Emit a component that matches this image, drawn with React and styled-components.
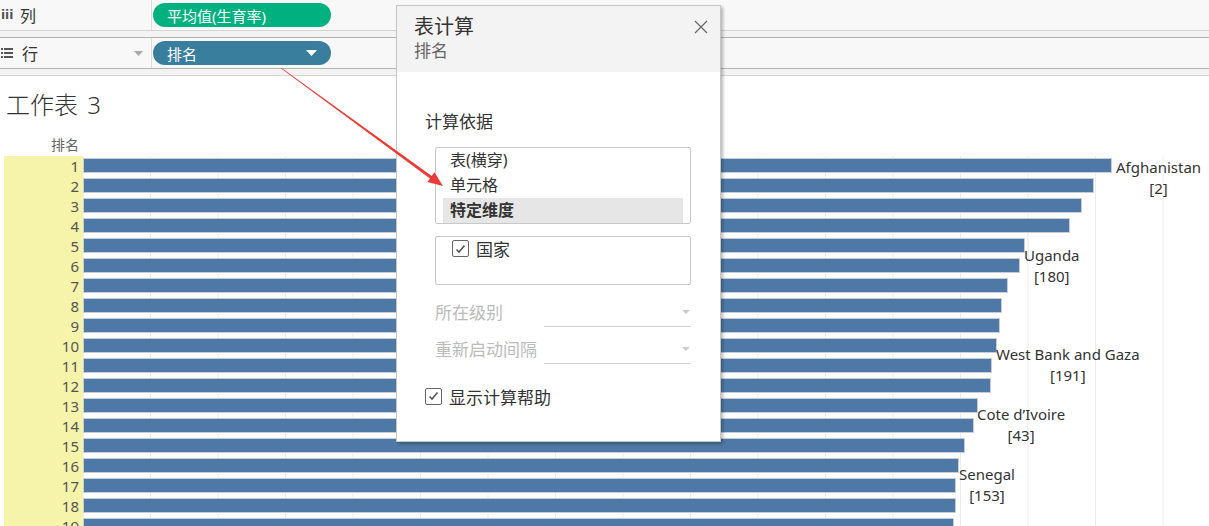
import React from "react";
import styled, { createGlobalStyle } from "styled-components";

const Global = createGlobalStyle`
  html, body { margin: 0; padding: 0; background: #fff; }
  body { font-family: "Noto Sans", "Noto Sans CJK SC", sans-serif; color: #333; overflow: hidden; }
  * { box-sizing: border-box; }
`;

const Page = styled.div`
  position: relative;
  width: 1209px;
  height: 526px;
  overflow: hidden;
  background: #fff;
`;

const ShelfRow = styled.div`
  display: flex;
  height: ${(p) => p.$h}px;
  background: #f8f8f8;
`;

const ShelfGap = styled.div`
  height: 8px;
  background: #f3f3f3;
  border-top: 1px solid ${(p) => p.$top};
  border-bottom: 1px solid ${(p) => p.$bottom};
`;

const ShelfLabel = styled.div`
  width: 152px;
  display: flex;
  align-items: center;
  gap: 9px;
  padding-left: 1px;
  padding-right: 8px;
  border-right: 1px solid #dcdcdc;
  font-size: 16px;
  color: #333;
`;

const ShelfIconText = styled.span`
  font-family: "DejaVu Sans", sans-serif;
  font-weight: bold;
  font-size: 12px;
  color: #555;
  width: 10px;
`;

const ShelfName = styled.span`
  flex: 1;
`;

const ShelfDrop = styled.div`
  flex: 1;
  display: flex;
  align-items: center;
  padding-left: 1px;
`;

const Pill = styled.div`
  width: 178px;
  height: 24px;
  border-radius: 12px;
  background: ${(p) => p.$bg};
  color: #fff;
  font-size: 15px;
  display: flex;
  align-items: center;
  justify-content: space-between;
  padding: 0 14px 0 14px;
`;

const Sheet = styled.div`
  padding: 14px 0 0 4px;
`;

const Title = styled.div`
  font-size: 24px;
  line-height: 30px;
  font-weight: 300;
  color: #333;
  padding-left: 2px;
  word-spacing: 3px;
`;

const Chart = styled.div`
  position: relative;
  margin-top: 14px;
`;

const HeaderRow = styled.div`
  display: grid;
  grid-template-columns: 80px 1fr;
  height: 22px;
`;

const HeaderCell = styled.div`
  text-align: right;
  padding-right: 5px;
  font-size: 14px;
  line-height: 22px;
  color: #666;
`;

const Row = styled.div`
  display: grid;
  grid-template-columns: 79px 1fr;
  height: 20px;
`;

const RankCell = styled.div`
  background: #f6f4aa;
  text-align: right;
  padding-right: 4px;
  font-size: 15px;
  line-height: 20px;
  color: #555;
`;

const PlotCell = styled.div`
  background-image: linear-gradient(to right, #ececec 1px, transparent 1px);
  background-size: 67.5px 100%;
  background-position: 67px 0;
  padding-top: 2px;
`;

const Bar = styled.div`
  height: 15px;
  background: #4e79a7;
  border: 1px solid #c9cdd3;
`;

const MarkLabel = styled.div`
  position: absolute;
  text-align: center;
  font-size: 15px;
  line-height: 21px;
  color: #333;
  white-space: nowrap;
`;

const Dialog = styled.div`
  position: absolute;
  left: 396px;
  top: 5px;
  width: 325px;
  height: 437px;
  background: #fff;
  border: 1px solid #c6c6c6;
  box-shadow: 2px 2px 3px rgba(0, 0, 0, 0.28);
  display: flex;
  flex-direction: column;
`;

const DialogHeader = styled.div`
  position: relative;
  height: 66px;
  background: #f3f3f3;
  padding: 9px 18px 0 17px;
`;

const DialogTitle = styled.div`
  font-size: 20px;
  line-height: 24px;
  color: #333;
`;

const DialogSub = styled.div`
  font-size: 17px;
  line-height: 24px;
  color: #666;
`;

const CloseBtn = styled.div`
  position: absolute;
  right: 12px;
  top: 11px;
  width: 14px;
  height: 14px;
`;

const DialogBody = styled.div`
  padding: 38px 29px 0 28px;
`;

const SectionLabel = styled.div`
  font-size: 17px;
  line-height: 24px;
  color: #333;
`;

const ListBox = styled.div`
  margin: ${(p) => p.$mt}px 0 0 10px;
  width: 256px;
  border: 1px solid #c8c8c8;
  border-radius: 2px;
  height: ${(p) => p.$h}px;
  padding: ${(p) => p.$pad || "0"};
`;

const ListItem = styled.div`
  height: 25px;
  margin: 0 7px;
  padding-left: 7px;
  font-size: 16px;
  line-height: 25px;
  font-weight: ${(p) => (p.$sel ? 700 : 400)};
  background: ${(p) => (p.$sel ? "#e6e6e6" : "transparent")};
  color: #333;
`;

const CheckRow = styled.div`
  display: flex;
  align-items: center;
  gap: 7px;
  height: ${(p) => p.$h || 24}px;
  margin: ${(p) => p.$m || "0"};
  font-size: 17px;
  color: #333;
`;

const CheckBox = styled.div`
  width: 17px;
  height: 17px;
  border: 1px solid #666;
  border-radius: 2px;
  display: flex;
  align-items: center;
  justify-content: center;
  background: #fff;
`;

const Fields = styled.div`
  margin: 8px 0 0 10px;
  width: 256px;
`;

const FieldRow = styled.div`
  display: flex;
  align-items: center;
  height: 37px;
`;

const FieldLabel = styled.div`
  width: 109px;
  font-size: 17px;
  color: #bbb;
  white-space: nowrap;
`;

const Select = styled.div`
  flex: 1;
  height: 29px;
  margin-top: 1px;
  border-bottom: 1px solid #d2d2d2;
  display: flex;
  justify-content: flex-end;
  align-items: center;
  padding-right: 1px;
`;

const Overlay = styled.svg`
  position: absolute;
  left: 0;
  top: 0;
  pointer-events: none;
`;

const Tri = ({ color, w = 9, h = 5 }) => (
  <svg width={w} height={h} viewBox={`0 0 ${w} ${h}`}>
    <polygon points={`0,0 ${w},0 ${w / 2},${h}`} fill={color} />
  </svg>
);

const RowsIcon = () => (
  <svg width="12" height="10" viewBox="0 0 12 10">
    <rect x="0" y="0" width="2" height="2" fill="#555" />
    <rect x="3" y="0" width="9" height="2" fill="#555" />
    <rect x="0" y="4" width="2" height="2" fill="#555" />
    <rect x="3" y="4" width="9" height="2" fill="#555" />
    <rect x="0" y="8" width="2" height="2" fill="#555" />
    <rect x="3" y="8" width="9" height="2" fill="#555" />
  </svg>
);

const Check = () => (
  <svg width="11" height="10" viewBox="0 0 11 10">
    <polyline points="1.5,5.5 4,8 9.5,1.5" fill="none" stroke="#555" strokeWidth="1.6" />
  </svg>
);

const barEnds = [1112, 1094, 1082, 1070, 1025, 1020, 1008, 1002, 1000, 997, 992, 991, 978, 974, 965, 959, 956, 956, 954, 952];

const labels = [
  { name: "Afghanistan", n: "[2]", left: 1112, top: 22.5 },
  { name: "Uganda", n: "[180]", left: 1020, top: 110.5 },
  { name: "West Bank and Gaza", n: "[191]", left: 992, top: 209.5 },
  { name: "Cote d\u2019Ivoire", n: "[43]", left: 973, top: 269.5 },
  { name: "Senegal", n: "[153]", left: 955, top: 329.5 },
];

function ArrowShape() {
  const sx = 281, sy = 68, tx = 443, ty = 186;
  const dx = tx - sx, dy = ty - sy;
  const len = Math.hypot(dx, dy);
  const ux = dx / len, uy = dy / len;
  const nx = -uy, ny = ux;
  const headLen = 15, headW = 6;
  const bx = tx - ux * headLen, by = ty - uy * headLen;
  const s0 = 0.4, s1 = 1.5;
  const pts = [
    [sx + nx * s0, sy + ny * s0],
    [bx + nx * s1, by + ny * s1],
    [bx + nx * headW, by + ny * headW],
    [tx, ty],
    [bx - nx * headW, by - ny * headW],
    [bx - nx * s1, by - ny * s1],
    [sx - nx * s0, sy - ny * s0],
  ];
  return <polygon points={pts.map((p) => p.join(",")).join(" ")} fill="#ec3b36" />;
}

export default function App() {
  return (
    <Page>
      <Global />
      <ShelfRow $h={30}>
        <ShelfLabel>
          <ShelfIconText>iii</ShelfIconText>
          <ShelfName>列</ShelfName>
        </ShelfLabel>
        <ShelfDrop>
          <Pill $bg="#00b180">平均值(生育率)</Pill>
        </ShelfDrop>
      </ShelfRow>
      <ShelfGap $top="#d4d4d4" $bottom="#b3b3b3" />
      <ShelfRow $h={30}>
        <ShelfLabel>
          <RowsIcon />
          <ShelfName>行</ShelfName>
          <Tri color="#aaa" w={9} h={5} />
        </ShelfLabel>
        <ShelfDrop>
          <Pill $bg="#397e9c">
            <span>排名</span>
            <Tri color="#fff" w={11} h={6} />
          </Pill>
        </ShelfDrop>
      </ShelfRow>
      <ShelfGap $top="#b3b3b3" $bottom="#d4d4d4" />
      <Sheet>
        <Title>工作表 3</Title>
        <Chart>
          <HeaderRow>
            <HeaderCell>排名</HeaderCell>
            <div />
          </HeaderRow>
          {barEnds.map((end, i) => (
            <Row key={i}>
              <RankCell>{i + 1}</RankCell>
              <PlotCell>
                <Bar style={{ width: end - 83 }} />
              </PlotCell>
            </Row>
          ))}
          {labels.map((l) => (
            <MarkLabel key={l.name} style={{ left: l.left, top: l.top }}>
              {l.name}
              <br />
              {l.n}
            </MarkLabel>
          ))}
        </Chart>
      </Sheet>

      <Dialog>
        <DialogHeader>
          <DialogTitle>表计算</DialogTitle>
          <DialogSub>排名</DialogSub>
          <CloseBtn>
            <svg width="14" height="14" viewBox="0 0 14 14">
              <path d="M1 1 L13 13 M13 1 L1 13" stroke="#666" strokeWidth="1.2" />
            </svg>
          </CloseBtn>
        </DialogHeader>
        <DialogBody>
          <SectionLabel>计算依据</SectionLabel>
          <ListBox $mt={13} $h={77}>
            <ListItem>表(横穿)</ListItem>
            <ListItem>单元格</ListItem>
            <ListItem $sel>特定维度</ListItem>
          </ListBox>
          <ListBox $mt={12} $h={49} $pad="2px 0 0 16px">
            <CheckRow $h={19}>
              <CheckBox>
                <Check />
              </CheckBox>
              国家
            </CheckRow>
          </ListBox>
          <Fields>
            <FieldRow>
              <FieldLabel>所在级别</FieldLabel>
              <Select>
                <Tri color="#ccc" w={8} h={4} />
              </Select>
            </FieldRow>
            <FieldRow>
              <FieldLabel>重新启动间隔</FieldLabel>
              <Select>
                <Tri color="#ccc" w={8} h={4} />
              </Select>
            </FieldRow>
          </Fields>
          <CheckRow $m="17px 0 0 0">
            <CheckBox>
              <Check />
            </CheckBox>
            显示计算帮助
          </CheckRow>
        </DialogBody>
      </Dialog>

      <Overlay width="1209" height="526" viewBox="0 0 1209 526">
        <ArrowShape />
      </Overlay>
    </Page>
  );
}
